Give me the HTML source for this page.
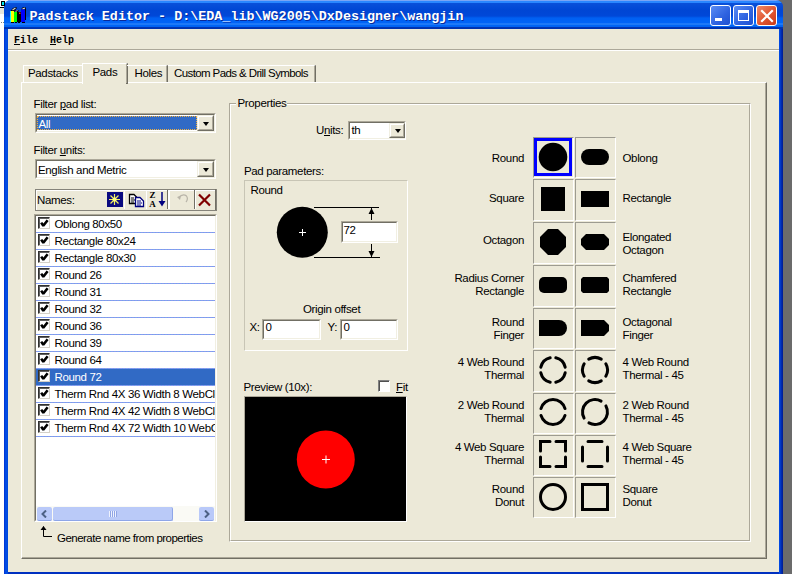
<!DOCTYPE html>
<html><head><meta charset="utf-8">
<style>
*{margin:0;padding:0;box-sizing:border-box}
html,body{width:792px;height:574px;overflow:hidden;background:#fff;position:relative}
body{font-family:"Liberation Sans",sans-serif;font-size:11px;color:#000}
.a{position:absolute}
.t{position:absolute;white-space:nowrap;font-size:11.5px;line-height:13px;letter-spacing:-0.35px}
.r{text-align:right}
#win{left:4px;top:0;width:779px;height:590px;background:#0041D6;border-radius:7px 7px 0 0}
#title{left:4px;top:0;width:779px;height:29px;border-radius:7px 7px 0 0;background:linear-gradient(#7CA4F4 0px,#7CA4F4 1px,#2A86FF 1px,#2A86FF 3px,#0A50DA 3px,#0046D4 10px,#0048D8 16px,#0060F2 18px,#0064F8 23px,#3A8CF8 24px,#0066F8 25px,#0062F0 27px,#0036B8 27px,#0030A8 29px)}
#content{left:8px;top:29px;width:771px;height:543px;background:#ECE9D8}
#rstrip{left:783px;top:0;width:9px;height:574px;background:#6B6B6B}
.tb{font-family:"Liberation Mono",monospace;font-weight:bold;color:#fff;font-size:13.4px;letter-spacing:0px;text-shadow:1px 1px 0 #0A2A9A}
.wbtn{position:absolute;top:5px;width:21px;height:21px;border:1px solid #fff;border-radius:3px;
 background:linear-gradient(135deg,#5A8CF4,#2E62E0 60%,#1F50D0)}
.menu{font-family:"Liberation Mono",monospace;font-size:10px;letter-spacing:0px;font-weight:bold}
.sunk{position:absolute;border-style:solid;border-width:1px;border-color:#ACA899 #fff #fff #ACA899;background:#fff}
.sunk>.in{position:absolute;left:0;top:0;right:0;bottom:0;border-style:solid;border-width:1px;border-color:#716F64 #F1EFE2 #F1EFE2 #716F64}
.btn3d{position:absolute;background:#ECE9D8;border-style:solid;border-width:1px;border-color:#F1EFE2 #716F64 #716F64 #F1EFE2}
.btn3d>.in{position:absolute;left:0;top:0;right:0;bottom:0;border-style:solid;border-width:1px;border-color:#fff #ACA899 #ACA899 #fff}
.arr{position:absolute;width:0;height:0;border-left:3.5px solid transparent;border-right:3.5px solid transparent;border-top:4px solid #000}
.cell{position:absolute;width:42px;border-style:solid;border-width:1px;border-color:#9D9B90 #fff #fff #9D9B90}
</style></head><body>
<div class="a" style="left:770px;top:0;width:22px;height:12px;background:#6B6B6B"></div>
<div class="a" id="win"></div>
<div class="a" id="title"></div>
<div class="a" id="content"></div>
<div class="a" id="rstrip"></div>
<!-- bottom border -->
<div class="a" style="left:4px;top:572px;width:779px;height:2px;background:#0030C0"></div>
<!-- left border shading -->
<div class="a" style="left:4px;top:29px;width:4px;height:545px;background:linear-gradient(90deg,#0030D0,#0050E8 50%,#0045D8)"></div>
<div class="a" style="left:779px;top:29px;width:4px;height:545px;background:linear-gradient(90deg,#0050F0,#0030B8 50%,#001A90)"></div>
<!-- top-left app bits -->
<div class="a" style="left:1px;top:1px;width:4px;height:5px;background:#00E8F0;border:1px solid #000"></div>
<div class="a" style="left:0;top:7px;width:4px;height:1px;background:#000"></div>
<div class="a" style="left:0;top:8px;width:4px;height:6px;background:#E8E6DA"></div>
<div class="a" style="left:1px;top:22px;width:1px;height:1px;background:#808080"></div>
<div class="a" style="left:3px;top:22px;width:1px;height:1px;background:#808080"></div>

<!-- title icon -->
<svg class="a" style="left:8px;top:4px" width="22" height="22" viewBox="8 4 22 22">
 <path d="M10 11.5 L13 8 L16 7 L17 8 L14 11.5 Z" fill="#000"/>
 <path d="M12.5 10 L15.5 8" stroke="#D8D8D8" stroke-width="1.2"/>
 <path d="M14 12 L16 10 L18 10 L19 11 L17 12.5 Z" fill="#000"/>
 <path d="M15.5 11.5 L17.5 10.5" stroke="#D0D0D0" stroke-width="1"/>
 <rect x="10" y="11" width="1" height="11" fill="#00FFFF"/>
 <rect x="11" y="11" width="3" height="11" fill="#FFFF00"/>
 <rect x="14" y="12" width="3" height="10" fill="#00FF00"/>
 <rect x="17" y="12" width="4" height="10" fill="#000"/>
 <rect x="19" y="12.5" width="1.5" height="1.5" fill="#FF2020"/>
 <path d="M21 9.5 L22.5 7.5 L25 7 L26 8 L26 20 L25 20 L25 9.5 Z" fill="#000"/>
 <path d="M22.5 9 L25 8" stroke="#E0E0E0" stroke-width="1.2"/>
 <rect x="21" y="9.5" width="4" height="12.5" fill="#0000FF"/>
 <path d="M11 22 H14 V23 H11 Z M15 22 H17 V23 H15 Z M18 22 H20 V23 H18 Z M22 22 H25 V23 H22 Z" fill="#000"/>
</svg>
<div class="t tb" style="left:29.5px;top:8px;line-height:18px">Padstack Editor - D:\EDA_lib\WG2005\DxDesigner\wangjin</div>

<!-- window buttons -->
<div class="wbtn" style="left:710px"><div class="a" style="left:4px;top:12px;width:7px;height:3px;background:#fff"></div></div>
<div class="wbtn" style="left:733px"><div class="a" style="left:4px;top:4px;width:11px;height:11px;border:1px solid #fff;border-top-width:3px"></div></div>
<div class="wbtn" style="left:756px;background:linear-gradient(135deg,#F08A6A,#E05530 55%,#C83A18)">
 <svg class="a" style="left:0;top:0" width="21" height="21" viewBox="0 0 21 21"><path d="M5 5 L15 15 M15 5 L5 15" stroke="#fff" stroke-width="2.2" stroke-linecap="square"/></svg>
</div>

<!-- menu -->
<div class="t menu" style="left:14px;top:34px"><u>F</u>ile</div>
<div class="t menu" style="left:50px;top:34px"><u>H</u>elp</div>
<div class="a" style="left:8px;top:49px;width:771px;height:1px;background:#ACA899"></div>
<div class="a" style="left:8px;top:50px;width:771px;height:1px;background:#fff"></div>


<!-- tab panel -->
<div class="a" style="left:21px;top:82px;width:746px;height:477px;border-style:solid;border-width:1px;border-color:#fff #716F64 #716F64 #fff"></div>
<div class="a" style="left:22px;top:83px;width:744px;height:475px;border-style:solid;border-width:0 1px 1px 0;border-color:#ACA899"></div>
<!-- tabs -->
<div class="a" style="left:23px;top:65px;width:60px;height:17px;border-style:solid;border-width:1px 1px 0 1px;border-color:#fff #ECE9D8 #fff #fff"></div>
<div class="t" style="left:28px;top:67px">Padstacks</div>
<div class="a" style="left:82px;top:63px;width:46px;height:21px;background:#ECE9D8;border-style:solid;border-width:1px 2px 0 1px;border-color:#fff #716F64 #fff #fff"></div>
<div class="a" style="left:126px;top:64px;width:1px;height:19px;background:#ACA899"></div>
<div class="t" style="left:92.5px;top:66px">Pads</div>
<div class="a" style="left:127px;top:65px;width:41px;height:17px;border-style:solid;border-width:1px 2px 0 0;border-color:#fff #716F64 #fff #fff"></div>
<div class="a" style="left:166px;top:66px;width:1px;height:16px;background:#ACA899"></div>
<div class="t" style="left:134.5px;top:67px">Holes</div>
<div class="a" style="left:168px;top:65px;width:148px;height:17px;border-style:solid;border-width:1px 2px 0 0;border-color:#fff #716F64 #fff #fff"></div>
<div class="a" style="left:314px;top:66px;width:1px;height:16px;background:#ACA899"></div>
<div class="t" style="left:174px;top:67px;letter-spacing:-0.6px">Custom Pads &amp; Drill Symbols</div>

<!-- left panel -->
<div class="t" style="left:33.5px;top:97.5px">Filter <u>p</u>ad list:</div>
<div class="sunk" style="left:35px;top:113px;width:181px;height:20px"><div class="in"></div></div>
<div class="a" style="left:37px;top:116px;width:160px;height:14px;background:#316AC5;outline:1px dotted #F0B040;outline-offset:-1px"></div>
<div class="t" style="left:38.5px;top:117.5px;color:#fff">All</div>
<div class="btn3d" style="left:197px;top:115px;width:17px;height:16px"><div class="in"></div><div class="arr" style="left:5px;top:6px"></div></div>

<div class="t" style="left:33.5px;top:143.5px">Filter <u>u</u>nits:</div>
<div class="sunk" style="left:35px;top:159px;width:181px;height:20px"><div class="in"></div></div>
<div class="t" style="left:38px;top:163.5px">English and Metric</div>
<div class="btn3d" style="left:197px;top:161px;width:17px;height:16px"><div class="in"></div><div class="arr" style="left:5px;top:6px"></div></div>

<!-- names toolbar -->
<div class="a" style="left:35px;top:189px;width:182px;height:22px;border:1px solid #85837A"></div><div class="a" style="left:36px;top:190px;width:180px;height:20px;border-style:solid;border-width:1px 0 0 1px;border-color:#fff"></div>
<div class="t" style="left:37px;top:193.5px">Names:</div>


<!-- toolbar buttons -->
<div class="a" style="left:107px;top:192px;width:16px;height:15px;background:#0A0A80"></div>
<svg class="a" style="left:107px;top:192px" width="16" height="15" viewBox="0 0 16 15">
 <path d="M7.5 2 V13 M2 7.5 H13 M3.5 3.5 L11.5 11.5 M11.5 3.5 L3.5 11.5" stroke="#F0F060" stroke-width="1.2"/>
 <circle cx="7.5" cy="7.5" r="2" fill="#FFFF80"/>
</svg>
<div class="a" style="left:124px;top:190px;width:1px;height:19px;background:#fff"></div>
<svg class="a" style="left:128px;top:193px" width="18" height="15" viewBox="0 0 18 15">
 <path d="M1.5 1.5 H6 L8.5 4 V10.5 H1.5 Z" fill="#fff" stroke="#000" stroke-width="1.3"/>
 <path d="M3 5 H6 M3 7 H7 M3 9 H6" stroke="#000" stroke-width="1"/>
 <path d="M7.5 4.5 H12 L15.5 8 V13.5 H7.5 Z" fill="#fff" stroke="#000080" stroke-width="1.3"/>
 <path d="M9 8 H13 M9 10 H14 M9 12 H13" stroke="#000080" stroke-width="1"/>
</svg>
<div class="a" style="left:146px;top:190px;width:1px;height:19px;background:#fff"></div>
<div class="a" style="left:148.5px;top:190.5px;font-family:'Liberation Serif',serif;font-weight:bold;font-size:9px;line-height:9px;width:8px;text-align:center">Z<br>A</div>
<svg class="a" style="left:158px;top:192px" width="8" height="15" viewBox="0 0 8 15">
 <path d="M4 0 V10" stroke="#000080" stroke-width="1.5"/><path d="M0.5 9 L7.5 9 L4 14.5 Z" fill="#000080"/>
</svg>
<div class="a" style="left:167px;top:190px;width:1px;height:19px;background:#716F64"></div>
<div class="a" style="left:168px;top:190px;width:2px;height:19px;background:#fff"></div>
<svg class="a" style="left:176px;top:193px" width="14" height="12" viewBox="0 0 14 12">
 <path d="M2.5 4.5 Q7 0 10.5 3 Q12.5 6 10 9" stroke="#B8B4A8" stroke-width="1.2" fill="none"/>
 <path d="M1 4 L5 3 L4 7 Z" fill="#B8B4A8"/>
</svg>
<div class="a" style="left:194px;top:190px;width:1px;height:19px;background:#716F64"></div>
<div class="a" style="left:195px;top:190px;width:1px;height:19px;background:#fff"></div>
<svg class="a" style="left:197px;top:193px" width="15" height="14" viewBox="0 0 15 14">
 <path d="M2 1.5 L13 12.5 M13 1.5 L2 12.5" stroke="#800000" stroke-width="2.2"/>
</svg>
<div class="a" style="left:215px;top:189px;width:1px;height:21px;background:#716F64"></div>

<!-- list -->
<div class="sunk" style="left:34px;top:214px;width:183px;height:308px"><div class="in"></div></div>

<!-- list items -->
<div class="a" style="left:36px;top:216px;width:179px;height:290px;overflow:hidden">
<div class="a" style="left:2px;top:1px;width:12px;height:12px;background:#fff;border-style:solid;border-width:1px;border-color:#303030 #D4D0C8 #D4D0C8 #303030;box-shadow:inset 1px 1px 0 #606060"><svg class="a" style="left:0px;top:0px" width="10" height="10" viewBox="0 0 10 10"><path d="M2.2 4.6 L4.3 7.8 L8.6 2.2" stroke="#000" stroke-width="2.6" fill="none" stroke-linejoin="bevel"/></svg></div>
<div class="t" style="left:18.5px;top:2px;color:#000">Oblong 80x50</div>
<div class="a" style="left:0;top:16px;width:179px;height:1px;background:repeating-linear-gradient(90deg,#8A98F0 0 2px,#70A8E8 2px 3px)"></div>
<div class="a" style="left:2px;top:18px;width:12px;height:12px;background:#fff;border-style:solid;border-width:1px;border-color:#303030 #D4D0C8 #D4D0C8 #303030;box-shadow:inset 1px 1px 0 #606060"><svg class="a" style="left:0px;top:0px" width="10" height="10" viewBox="0 0 10 10"><path d="M2.2 4.6 L4.3 7.8 L8.6 2.2" stroke="#000" stroke-width="2.6" fill="none" stroke-linejoin="bevel"/></svg></div>
<div class="t" style="left:18.5px;top:19px;color:#000">Rectangle 80x24</div>
<div class="a" style="left:0;top:33px;width:179px;height:1px;background:repeating-linear-gradient(90deg,#8A98F0 0 2px,#70A8E8 2px 3px)"></div>
<div class="a" style="left:2px;top:35px;width:12px;height:12px;background:#fff;border-style:solid;border-width:1px;border-color:#303030 #D4D0C8 #D4D0C8 #303030;box-shadow:inset 1px 1px 0 #606060"><svg class="a" style="left:0px;top:0px" width="10" height="10" viewBox="0 0 10 10"><path d="M2.2 4.6 L4.3 7.8 L8.6 2.2" stroke="#000" stroke-width="2.6" fill="none" stroke-linejoin="bevel"/></svg></div>
<div class="t" style="left:18.5px;top:36px;color:#000">Rectangle 80x30</div>
<div class="a" style="left:0;top:50px;width:179px;height:1px;background:repeating-linear-gradient(90deg,#8A98F0 0 2px,#70A8E8 2px 3px)"></div>
<div class="a" style="left:2px;top:52px;width:12px;height:12px;background:#fff;border-style:solid;border-width:1px;border-color:#303030 #D4D0C8 #D4D0C8 #303030;box-shadow:inset 1px 1px 0 #606060"><svg class="a" style="left:0px;top:0px" width="10" height="10" viewBox="0 0 10 10"><path d="M2.2 4.6 L4.3 7.8 L8.6 2.2" stroke="#000" stroke-width="2.6" fill="none" stroke-linejoin="bevel"/></svg></div>
<div class="t" style="left:18.5px;top:53px;color:#000">Round 26</div>
<div class="a" style="left:0;top:67px;width:179px;height:1px;background:repeating-linear-gradient(90deg,#8A98F0 0 2px,#70A8E8 2px 3px)"></div>
<div class="a" style="left:2px;top:69px;width:12px;height:12px;background:#fff;border-style:solid;border-width:1px;border-color:#303030 #D4D0C8 #D4D0C8 #303030;box-shadow:inset 1px 1px 0 #606060"><svg class="a" style="left:0px;top:0px" width="10" height="10" viewBox="0 0 10 10"><path d="M2.2 4.6 L4.3 7.8 L8.6 2.2" stroke="#000" stroke-width="2.6" fill="none" stroke-linejoin="bevel"/></svg></div>
<div class="t" style="left:18.5px;top:70px;color:#000">Round 31</div>
<div class="a" style="left:0;top:84px;width:179px;height:1px;background:repeating-linear-gradient(90deg,#8A98F0 0 2px,#70A8E8 2px 3px)"></div>
<div class="a" style="left:2px;top:86px;width:12px;height:12px;background:#fff;border-style:solid;border-width:1px;border-color:#303030 #D4D0C8 #D4D0C8 #303030;box-shadow:inset 1px 1px 0 #606060"><svg class="a" style="left:0px;top:0px" width="10" height="10" viewBox="0 0 10 10"><path d="M2.2 4.6 L4.3 7.8 L8.6 2.2" stroke="#000" stroke-width="2.6" fill="none" stroke-linejoin="bevel"/></svg></div>
<div class="t" style="left:18.5px;top:87px;color:#000">Round 32</div>
<div class="a" style="left:0;top:101px;width:179px;height:1px;background:repeating-linear-gradient(90deg,#8A98F0 0 2px,#70A8E8 2px 3px)"></div>
<div class="a" style="left:2px;top:103px;width:12px;height:12px;background:#fff;border-style:solid;border-width:1px;border-color:#303030 #D4D0C8 #D4D0C8 #303030;box-shadow:inset 1px 1px 0 #606060"><svg class="a" style="left:0px;top:0px" width="10" height="10" viewBox="0 0 10 10"><path d="M2.2 4.6 L4.3 7.8 L8.6 2.2" stroke="#000" stroke-width="2.6" fill="none" stroke-linejoin="bevel"/></svg></div>
<div class="t" style="left:18.5px;top:104px;color:#000">Round 36</div>
<div class="a" style="left:0;top:118px;width:179px;height:1px;background:repeating-linear-gradient(90deg,#8A98F0 0 2px,#70A8E8 2px 3px)"></div>
<div class="a" style="left:2px;top:120px;width:12px;height:12px;background:#fff;border-style:solid;border-width:1px;border-color:#303030 #D4D0C8 #D4D0C8 #303030;box-shadow:inset 1px 1px 0 #606060"><svg class="a" style="left:0px;top:0px" width="10" height="10" viewBox="0 0 10 10"><path d="M2.2 4.6 L4.3 7.8 L8.6 2.2" stroke="#000" stroke-width="2.6" fill="none" stroke-linejoin="bevel"/></svg></div>
<div class="t" style="left:18.5px;top:121px;color:#000">Round 39</div>
<div class="a" style="left:0;top:135px;width:179px;height:1px;background:repeating-linear-gradient(90deg,#8A98F0 0 2px,#70A8E8 2px 3px)"></div>
<div class="a" style="left:2px;top:137px;width:12px;height:12px;background:#fff;border-style:solid;border-width:1px;border-color:#303030 #D4D0C8 #D4D0C8 #303030;box-shadow:inset 1px 1px 0 #606060"><svg class="a" style="left:0px;top:0px" width="10" height="10" viewBox="0 0 10 10"><path d="M2.2 4.6 L4.3 7.8 L8.6 2.2" stroke="#000" stroke-width="2.6" fill="none" stroke-linejoin="bevel"/></svg></div>
<div class="t" style="left:18.5px;top:138px;color:#000">Round 64</div>
<div class="a" style="left:0;top:152px;width:179px;height:1px;background:repeating-linear-gradient(90deg,#8A98F0 0 2px,#70A8E8 2px 3px)"></div>
<div class="a" style="left:0;top:153px;width:179px;height:16px;background:#316AC5"></div>
<div class="a" style="left:2px;top:154px;width:12px;height:12px;background:#fff;border-style:solid;border-width:1px;border-color:#303030 #D4D0C8 #D4D0C8 #303030;box-shadow:inset 1px 1px 0 #606060"><svg class="a" style="left:0px;top:0px" width="10" height="10" viewBox="0 0 10 10"><path d="M2.2 4.6 L4.3 7.8 L8.6 2.2" stroke="#000" stroke-width="2.6" fill="none" stroke-linejoin="bevel"/></svg></div>
<div class="t" style="left:18.5px;top:155px;color:#fff">Round 72</div>
<div class="a" style="left:0;top:169px;width:179px;height:1px;background:repeating-linear-gradient(90deg,#8A98F0 0 2px,#70A8E8 2px 3px)"></div>
<div class="a" style="left:2px;top:171px;width:12px;height:12px;background:#fff;border-style:solid;border-width:1px;border-color:#303030 #D4D0C8 #D4D0C8 #303030;box-shadow:inset 1px 1px 0 #606060"><svg class="a" style="left:0px;top:0px" width="10" height="10" viewBox="0 0 10 10"><path d="M2.2 4.6 L4.3 7.8 L8.6 2.2" stroke="#000" stroke-width="2.6" fill="none" stroke-linejoin="bevel"/></svg></div>
<div class="t" style="left:18.5px;top:172px;color:#000">Therm Rnd 4X 36 Width 8 WebClearance</div>
<div class="a" style="left:0;top:186px;width:179px;height:1px;background:repeating-linear-gradient(90deg,#8A98F0 0 2px,#70A8E8 2px 3px)"></div>
<div class="a" style="left:2px;top:188px;width:12px;height:12px;background:#fff;border-style:solid;border-width:1px;border-color:#303030 #D4D0C8 #D4D0C8 #303030;box-shadow:inset 1px 1px 0 #606060"><svg class="a" style="left:0px;top:0px" width="10" height="10" viewBox="0 0 10 10"><path d="M2.2 4.6 L4.3 7.8 L8.6 2.2" stroke="#000" stroke-width="2.6" fill="none" stroke-linejoin="bevel"/></svg></div>
<div class="t" style="left:18.5px;top:189px;color:#000">Therm Rnd 4X 42 Width 8 WebClearance</div>
<div class="a" style="left:0;top:203px;width:179px;height:1px;background:repeating-linear-gradient(90deg,#8A98F0 0 2px,#70A8E8 2px 3px)"></div>
<div class="a" style="left:2px;top:205px;width:12px;height:12px;background:#fff;border-style:solid;border-width:1px;border-color:#303030 #D4D0C8 #D4D0C8 #303030;box-shadow:inset 1px 1px 0 #606060"><svg class="a" style="left:0px;top:0px" width="10" height="10" viewBox="0 0 10 10"><path d="M2.2 4.6 L4.3 7.8 L8.6 2.2" stroke="#000" stroke-width="2.6" fill="none" stroke-linejoin="bevel"/></svg></div>
<div class="t" style="left:18.5px;top:206px;color:#000">Therm Rnd 4X 72 Width 10 WebClearance</div>
<div class="a" style="left:0;top:220px;width:179px;height:1px;background:repeating-linear-gradient(90deg,#8A98F0 0 2px,#70A8E8 2px 3px)"></div>
</div>
<div class="a" style="left:36px;top:506px;width:179px;height:15px;background:#FAFAF5"></div>
<div class="a" style="left:37px;top:507px;width:15px;height:14px;background:#B9C9F9;border-radius:2px;border-bottom:1px solid #8EA6E8"><svg class="a" style="left:4px;top:3px" width="7" height="8" viewBox="0 0 7 8"><path d="M5 0.5 L1.5 4 L5 7.5" stroke="#4D6185" stroke-width="2" fill="none"/></svg></div>
<div class="a" style="left:53px;top:507px;width:120px;height:14px;background:#BACAF8;border-radius:2px;border-bottom:1px solid #8EA6E8;border-right:1px solid #8EA6E8"><div class="a" style="left:56px;top:4px;width:8px;height:6px;background:repeating-linear-gradient(90deg,#EEF2FE 0 1px,#8FA5E5 1px 2px)"></div></div>
<div class="a" style="left:199px;top:507px;width:15px;height:14px;background:#B9C9F9;border-radius:2px;border-bottom:1px solid #8EA6E8"><svg class="a" style="left:4px;top:3px" width="7" height="8" viewBox="0 0 7 8"><path d="M2 0.5 L5.5 4 L2 7.5" stroke="#4D6185" stroke-width="2" fill="none"/></svg></div>

<!-- generate -->
<svg class="a" style="left:40px;top:525px" width="14" height="13" viewBox="0 0 14 13"><path d="M3.5 1.5 V11.5 H12" stroke="#000" stroke-width="1" fill="none"/><path d="M0.5 5 L3.5 1 L6.5 5 Z" fill="#000"/></svg>
<div class="t" style="left:57px;top:531.5px;letter-spacing:-0.52px">Generate name from properties</div>

<!-- properties group -->
<div class="a" style="left:229px;top:103px;width:522px;height:439px;border-style:solid;border-width:1px;border-color:#ACA899 #fff #fff #ACA899"></div>
<div class="a" style="left:230px;top:104px;width:520px;height:437px;border-style:solid;border-width:1px;border-color:#fff #ACA899 #ACA899 #fff"></div>
<div class="a" style="left:236px;top:98px;width:50.5px;height:12px;background:#ECE9D8"></div>
<div class="t" style="left:237.5px;top:97px">Properties</div>


<!-- units -->
<div class="t" style="left:316px;top:124px">U<u>n</u>its:</div>
<div class="sunk" style="left:348px;top:121px;width:58px;height:19px"><div class="in"></div></div>
<div class="t" style="left:351.5px;top:124px">th</div>
<div class="btn3d" style="left:389px;top:123px;width:16px;height:15px"><div class="in"></div><div class="arr" style="left:4.5px;top:5px"></div></div>

<!-- pad parameters -->
<div class="t" style="left:244px;top:164.5px">Pad parameters:</div>
<div class="a" style="left:244px;top:180px;width:164px;height:171px;border-style:solid;border-width:1px;border-color:#C8C5B5 #fff #fff #C8C5B5"></div>
<div class="t" style="left:250.5px;top:183.5px">Round</div>
<svg class="a" style="left:270px;top:200px" width="120" height="65" viewBox="0 0 120 65">
 <circle cx="32.3" cy="32.3" r="25.5" fill="#000"/>
 <path d="M29 32.5 H36 M32.5 29 V36" stroke="#fff" stroke-width="1"/>
 <path d="M44 7.5 H109 M44 57.5 H110" stroke="#000" stroke-width="1"/>
 <path d="M101.5 8 V20 M101.5 44 V57" stroke="#000" stroke-width="1"/>
 <path d="M98.5 14 L101.5 8 L104.5 14 Z M98.5 51 L101.5 57 L104.5 51 Z" fill="#000"/>
</svg>
<div class="sunk" style="left:341px;top:221px;width:57px;height:22px"><div class="in"></div></div>
<div class="t" style="left:343.5px;top:224px">72</div>

<div class="t" style="left:303px;top:302.5px">Origin offset</div>
<div class="t" style="left:249.5px;top:321px">X:</div>
<div class="sunk" style="left:262px;top:319px;width:59px;height:21px"><div class="in"></div></div>
<div class="t" style="left:265.5px;top:321px">0</div>
<div class="t" style="left:327.5px;top:321px">Y:</div>
<div class="sunk" style="left:340px;top:319px;width:58px;height:21px"><div class="in"></div></div>
<div class="t" style="left:343.5px;top:321px">0</div>

<!-- preview -->
<div class="t" style="left:243.5px;top:380.5px">Preview (10x):</div>
<div class="a" style="left:378px;top:380px;width:12px;height:12px;background:#fff;border-style:solid;border-width:1px;border-color:#808080 #fff #fff #808080;box-shadow:inset 1px 1px 0 #505050"></div>
<div class="t" style="left:396px;top:380.5px"><u>F</u>it</div>
<div class="a" style="left:244px;top:396px;width:163px;height:126px;background:#000;border-style:solid;border-width:1px;border-color:#ACA899 #fff #fff #ACA899"></div>
<svg class="a" style="left:244px;top:396px" width="163" height="126" viewBox="0 0 163 126">
 <circle cx="81.8" cy="63.5" r="29" fill="#FF0000"/>
 <path d="M78 63.5 H86 M82 59.5 V67.5" stroke="#fff" stroke-width="1"/>
</svg>

<!-- grid -->
<div class="a" style="left:533px;top:137px;width:41px;height:41px;border-style:solid;border-width:1px;border-color:#9D9B90 #fff #fff #9D9B90"></div>
<div class="a" style="left:575px;top:137px;width:41px;height:41px;border-style:solid;border-width:1px;border-color:#9D9B90 #fff #fff #9D9B90"></div>
<div class="a" style="left:533px;top:179px;width:41px;height:42px;border-style:solid;border-width:1px;border-color:#9D9B90 #fff #fff #9D9B90"></div>
<div class="a" style="left:575px;top:179px;width:41px;height:42px;border-style:solid;border-width:1px;border-color:#9D9B90 #fff #fff #9D9B90"></div>
<div class="a" style="left:533px;top:222px;width:41px;height:42px;border-style:solid;border-width:1px;border-color:#9D9B90 #fff #fff #9D9B90"></div>
<div class="a" style="left:575px;top:222px;width:41px;height:42px;border-style:solid;border-width:1px;border-color:#9D9B90 #fff #fff #9D9B90"></div>
<div class="a" style="left:533px;top:265px;width:41px;height:42px;border-style:solid;border-width:1px;border-color:#9D9B90 #fff #fff #9D9B90"></div>
<div class="a" style="left:575px;top:265px;width:41px;height:42px;border-style:solid;border-width:1px;border-color:#9D9B90 #fff #fff #9D9B90"></div>
<div class="a" style="left:533px;top:308px;width:41px;height:41px;border-style:solid;border-width:1px;border-color:#9D9B90 #fff #fff #9D9B90"></div>
<div class="a" style="left:575px;top:308px;width:41px;height:41px;border-style:solid;border-width:1px;border-color:#9D9B90 #fff #fff #9D9B90"></div>
<div class="a" style="left:533px;top:350px;width:41px;height:42px;border-style:solid;border-width:1px;border-color:#9D9B90 #fff #fff #9D9B90"></div>
<div class="a" style="left:575px;top:350px;width:41px;height:42px;border-style:solid;border-width:1px;border-color:#9D9B90 #fff #fff #9D9B90"></div>
<div class="a" style="left:533px;top:393px;width:41px;height:41px;border-style:solid;border-width:1px;border-color:#9D9B90 #fff #fff #9D9B90"></div>
<div class="a" style="left:575px;top:393px;width:41px;height:41px;border-style:solid;border-width:1px;border-color:#9D9B90 #fff #fff #9D9B90"></div>
<div class="a" style="left:533px;top:435px;width:41px;height:41px;border-style:solid;border-width:1px;border-color:#9D9B90 #fff #fff #9D9B90"></div>
<div class="a" style="left:575px;top:435px;width:41px;height:41px;border-style:solid;border-width:1px;border-color:#9D9B90 #fff #fff #9D9B90"></div>
<div class="a" style="left:533px;top:477px;width:41px;height:41px;border-style:solid;border-width:1px;border-color:#9D9B90 #fff #fff #9D9B90"></div>
<div class="a" style="left:575px;top:477px;width:41px;height:41px;border-style:solid;border-width:1px;border-color:#9D9B90 #fff #fff #9D9B90"></div>
<div class="a" style="left:534px;top:138px;width:38px;height:38px;border:3px solid #0000FF"></div>
<svg class="a" style="left:530px;top:130px" width="90" height="395" viewBox="530 130 90 395">
<g fill="#000">
 <circle cx="553" cy="157" r="14.3"/>
 <rect x="581" y="149" width="28" height="16" rx="8"/>
 <rect x="541" y="187" width="24" height="24"/>
 <rect x="581" y="191" width="28" height="16"/>
 <path d="M548 229 H558 L566 237 V247 L558 255 H548 L540 247 V237 Z"/>
 <path d="M586 234 H604 L609 239 V245 L604 250 H586 L581 245 V239 Z"/>
 <rect x="539" y="277" width="28" height="16" rx="5"/>
 <path d="M583 277 H607 L609 279 V291 L607 293 H583 L581 291 V279 Z"/>
 <path d="M539 320 H559 A8 8 0 0 1 559 336 H539 Z"/>
 <path d="M581 320 H604 L609 325 V331 L604 336 H581 Z"/>
</g>
<g fill="none" stroke="#000" stroke-width="3" stroke-linecap="round">
<path d="M565.18 367.19 A12.5 12.5 0 0 0 555.81 357.82"/>
<path d="M550.19 357.82 A12.5 12.5 0 0 0 540.82 367.19"/>
<path d="M540.82 372.81 A12.5 12.5 0 0 0 550.19 382.18"/>
<path d="M555.81 382.18 A12.5 12.5 0 0 0 565.18 372.81"/>
<path d="M605.83 376.25 A12.5 12.5 0 0 0 605.83 363.75"/>
<path d="M601.25 359.17 A12.5 12.5 0 0 0 588.75 359.17"/>
<path d="M584.17 363.75 A12.5 12.5 0 0 0 584.17 376.25"/>
<path d="M588.75 380.83 A12.5 12.5 0 0 0 601.25 380.83"/>
<path d="M565.02 408.55 A12.5 12.5 0 0 0 540.98 408.55"/><path d="M540.98 415.45 A12.5 12.5 0 0 0 565.02 415.45"/>
<path d="M601.06 401.07 A12.5 12.5 0 0 0 584.07 418.06"/><path d="M588.94 422.93 A12.5 12.5 0 0 0 605.93 405.94"/>
</g>
<g fill="none" stroke="#000" stroke-width="3" stroke-linecap="round">
 <path d="M540.5 451 V441.5 H550 M556 441.5 H565.5 V451 M565.5 457 V466.5 H556 M550 466.5 H540.5 V457"/>
 <path d="M588 441.5 H602 M607.5 447 V461 M602 466.5 H588 M582.5 461 V447"/>
</g>
<circle cx="553" cy="497" r="12.5" fill="none" stroke="#000" stroke-width="3"/>
<rect x="582.5" y="484.5" width="25" height="25" fill="none" stroke="#000" stroke-width="3"/>
</svg>
<div class="t r" style="left:424px;width:100px;top:152.4px">Round</div>
<div class="t" style="left:622.5px;top:152.4px">Oblong</div>
<div class="t r" style="left:424px;width:100px;top:192.4px">Square</div>
<div class="t" style="left:622.5px;top:192.4px">Rectangle</div>
<div class="t r" style="left:424px;width:100px;top:233.7px">Octagon</div>
<div class="t" style="left:622.5px;top:231.0px">Elongated<br>Octagon</div>
<div class="t r" style="left:424px;width:100px;top:271.8px">Radius Corner<br>Rectangle</div>
<div class="t" style="left:622.5px;top:271.8px">Chamfered<br>Rectangle</div>
<div class="t r" style="left:424px;width:100px;top:315.7px">Round<br>Finger</div>
<div class="t" style="left:622.5px;top:315.7px">Octagonal<br>Finger</div>
<div class="t r" style="left:424px;width:100px;top:355.9px">4 Web Round<br>Thermal</div>
<div class="t" style="left:622.5px;top:355.9px">4 Web Round<br>Thermal - 45</div>
<div class="t r" style="left:424px;width:100px;top:399.2px">2 Web Round<br>Thermal</div>
<div class="t" style="left:622.5px;top:399.2px">2 Web Round<br>Thermal - 45</div>
<div class="t r" style="left:424px;width:100px;top:441.4px">4 Web Square<br>Thermal</div>
<div class="t" style="left:622.5px;top:441.4px">4 Web Square<br>Thermal - 45</div>
<div class="t r" style="left:424px;width:100px;top:483.4px">Round<br>Donut</div>
<div class="t" style="left:622.5px;top:483.4px">Square<br>Donut</div>
</body></html>
